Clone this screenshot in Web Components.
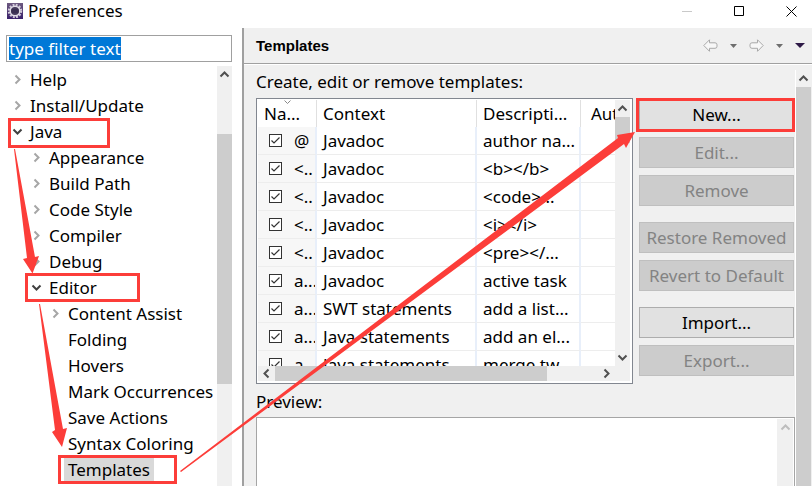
<!DOCTYPE html>
<html lang="en">
<head>
<meta charset="utf-8">
<title>Preferences</title>
<style>
html,body{height:100%;margin:0}
body{font:17px/26px "Noto Sans","Open Sans",sans-serif;color:#000;background:#fff;overflow:hidden}
</style>
</head>
<body>
<pref-window></pref-window>
<script>
const define = (name, html, init) => customElements.define(name, class extends HTMLElement {
  connectedCallback() {
    if (this.shadowRoot) return;
    const t = document.createElement('template');
    t.innerHTML = typeof html === 'function' ? html(this) : html;
    this.attachShadow({mode: 'open'}).append(t.content.cloneNode(true));
    if (init) init(this, this.shadowRoot);
  }
});

/* Chevron pointing right, down, up or left */
const turns = {right: 0, down: 90, left: 180, up: 270};
define('chevron-icon', el => `
<style>:host{display:block;width:11px;height:11px;color:#505050}svg{display:block}</style>
<svg width="11" height="11" viewBox="0 0 11 11"><path transform="rotate(${turns[el.getAttribute('dir')]} 5.5 5.5)" d="M3.5 1.5l4 4-4 4" fill="none" stroke="currentColor" stroke-width="2"/></svg>`);

define('scroll-bar', el => {
  const h = el.hasAttribute('horizontal');
  return `<style>
:host{display:flex;flex-direction:${h ? 'row' : 'column'};background:#f0f0f0;${h ? 'height' : 'width'}:15px;flex:none;overflow:hidden}
.end{flex:0 0 17px;display:grid;place-items:center}
.track{flex:1;display:flex;flex-direction:inherit;min-height:0}
.thumb{background:#cdcdcd;margin-${h ? 'left' : 'top'}:var(--start,0px);flex:0 0 var(--size,0px)}
chevron-icon{color:var(--arrow,#505050)}
</style>
<div class="end"><chevron-icon dir="${h ? 'left' : 'up'}"></chevron-icon></div>
<div class="track"><div class="thumb"></div></div>
${el.hasAttribute('open-end') ? '' : `<div class="end"><chevron-icon dir="${h ? 'right' : 'down'}"></chevron-icon></div>`}`;
});

define('title-bar', `
<style>
:host{display:flex;align-items:center;height:28px;flex:none;padding-left:7px;background:#fff}
h1{font:inherit;line-height:22px;margin:0 auto 6px 5px}
.logo{margin-bottom:6px}
.win{display:flex;gap:10px;align-self:flex-start}
button{width:42px;height:22px;border:0;padding:0;background:none;display:grid;place-items:center}
</style>
<svg class="logo" width="16" height="16" viewBox="0 0 16 16"><defs><linearGradient id="g" x2="0" y2="1"><stop offset="0" stop-color="#6d5a80"/><stop offset="1" stop-color="#39206b"/></linearGradient></defs>
<rect width="16" height="16" fill="url(#g)"/><circle cx="8" cy="8" r="6.2" fill="none" stroke="#d3cddb" stroke-width="2" stroke-dasharray="1.9 1.35"/><circle cx="8" cy="8" r="4.800" fill="#453a5c" stroke="#e2dee8" stroke-width="1.5"/><path d="M4.500 7h7M4.500 9h7" stroke="#2e2446"/></svg>
<h1>Preferences</h1>
<div class="win">
<button aria-label="Minimize"><svg width="11" height="11"><path d="M0 5.5h10" stroke="#c9c9c9"/></svg></button>
<button aria-label="Maximize"><svg width="11" height="11"><path d="M.5.5h9v9h-9z" fill="none" stroke="#000"/></svg></button>
<button aria-label="Close"><svg width="11" height="11"><path d="M.5.5l10 10M10.5.5l-10 10" stroke="#000"/></svg></button>
</div>`);

define('tree-item', el => {
  const s = el.getAttribute('state');
  return `<style>
:host{display:flex;align-items:center;height:26px;padding-left:calc(6px + 19px * ${el.getAttribute('level')});white-space:nowrap}
.mark{width:11px;margin-right:3px;flex:none}
chevron-icon{color:${s === 'open' ? '#404040' : '#a6a6a6'}}
.label{line-height:23px;padding:0 4px;${el.hasAttribute('selected') ? 'background:#d9d9d9' : ''}}
</style>
<span class="mark">${s ? `<chevron-icon dir="${s === 'open' ? 'down' : 'right'}"></chevron-icon>` : ''}</span>
<span class="label"><slot></slot></span>`;
}, el => el.setAttribute('role', 'treeitem'));

define('pref-sidebar', `
<style>
:host{display:flex;flex-direction:column;width:242px;flex:none;box-sizing:border-box;padding:7px 10px 0 6px;min-height:0}
input{font:inherit;line-height:23px;height:27px;box-sizing:border-box;border:1px solid #a0a0a0;padding:0 2px;margin:0 0 4px;width:100%;outline:0;border-radius:0;flex:none}
input::selection{background:#0078d7;color:#fff}
.tree{display:flex;flex:1;min-height:0}
.items{flex:1;min-width:0;overflow:hidden}
scroll-bar{--start:51px;--size:250px}
</style>
<input type="text" aria-label="Filter" value="type filter text">
<div class="tree"><div class="items" role="tree">
<tree-item level="0" state="closed">Help</tree-item>
<tree-item level="0" state="closed">Install/Update</tree-item>
<tree-item level="0" state="open">Java</tree-item>
<tree-item level="1" state="closed">Appearance</tree-item>
<tree-item level="1" state="closed">Build Path</tree-item>
<tree-item level="1" state="closed">Code Style</tree-item>
<tree-item level="1" state="closed">Compiler</tree-item>
<tree-item level="1" state="closed">Debug</tree-item>
<tree-item level="1" state="open">Editor</tree-item>
<tree-item level="2" state="closed">Content Assist</tree-item>
<tree-item level="2">Folding</tree-item>
<tree-item level="2">Hovers</tree-item>
<tree-item level="2">Mark Occurrences</tree-item>
<tree-item level="2">Save Actions</tree-item>
<tree-item level="2">Syntax Coloring</tree-item>
<tree-item level="2" selected>Templates</tree-item>
</div><scroll-bar open-end></scroll-bar></div>`, (el, root) => {
  const i = root.querySelector('input');
  i.focus(); i.select();
});

define('page-header', `
<style>
:host{display:flex;align-items:center;height:35px;flex:none;padding:0 7px 0 12px;border-bottom:1px solid #a0a0a0;box-shadow:0 1px #fff}
h2{font:bold 15px/20px "Liberation Sans",Arial,sans-serif;margin:0 auto 0 0}
nav{display:flex;gap:12px}
button{border:0;background:none;padding:0;height:20px;display:grid;place-items:center}
</style>
<h2>Templates</h2>
<nav aria-label="History">
<button aria-label="Back"><svg width="15" height="13"><path d="M.8 6.5L6.5.8v3H12q2 0 2 2v1.5q0 2-2 2H6.5v3z" fill="#f7f7f7" stroke="#a9a9a9"/></svg></button>
<button aria-label="Back history"><svg width="7" height="4"><path d="M0 0h7L3.5 4z" fill="#6e6e6e"/></svg></button>
<button aria-label="Forward"><svg width="15" height="13"><path d="M14.2 6.5L8.5.8v3H3q-2 0-2 2v1.5q0 2 2 2h5.5v3z" fill="#f7f7f7" stroke="#a9a9a9"/></svg></button>
<button aria-label="Forward history"><svg width="7" height="4"><path d="M0 0h7L3.5 4z" fill="#6e6e6e"/></svg></button>
<button aria-label="View menu"><svg width="10" height="5"><path d="M0 0h10L5 5z" fill="#2e1a47"/></svg></button>
</nav>`);

const rows = [
  ['@', 'Javadoc', 'author na...'], ['<..', 'Javadoc', '<b></b>'], ['<..', 'Javadoc', '<code>...'],
  ['<..', 'Javadoc', '<i></i>'], ['<..', 'Javadoc', '<pre></...'], ['a...', 'Javadoc', 'active task'],
  ['a...', 'SWT statements', 'add a list...'], ['a...', 'Java statements', 'add an el...'], ['a...', 'Java statements', 'merge tw...']
];
const esc = s => s.replace(/</g, '&lt;').replace(/>/g, '&gt;');
define('template-table', () => `
<style>
:host{display:grid;grid-template:266px 15px / 1fr 15px;flex:1;min-width:0;box-sizing:border-box;border:1px solid #828790;padding:1px 2px 2px 1px;background:#fff;position:relative}
.view{overflow:hidden;min-width:0}
table{table-layout:fixed;border-collapse:separate;border-spacing:0;width:100%;line-height:27px}
th{font-weight:400;text-align:left;border-right:1px solid #e0e0e0;background:#fff}
td{border-right:2px solid #e8effa;border-bottom:1px solid #ededed}
th,td{height:27px;padding:0 0 0 6px;white-space:nowrap;overflow:hidden}
tr>:first-child{width:52px}tr>:nth-child(2){width:153px}tr>:nth-child(3){width:97px}
tr>:last-child{border-right:0;padding-left:10px}
td:first-child{background:#f7f7f7}
label{display:flex;align-items:center;gap:12px;padding-left:5px}
input{appearance:none;flex:none;width:13px;height:13px;margin:0;border:1px solid #333;background:#fff url("data:image/svg+xml,%3Csvg xmlns='http://www.w3.org/2000/svg' viewBox='0 0 11 11'%3E%3Cpath d='M1.5 5.5l2.5 2.5 5.5-5.5' fill='none' stroke='%23333' stroke-width='1.2'/%3E%3C/svg%3E")}
.v{--size:26px}.h{--size:272px}
.corner{background:#f0f0f0}
.sort{position:absolute;left:27px;top:1px}
</style>
<div class="view"><table><thead><tr><th>Na...</th><th>Context</th><th>Descripti...</th><th>Aut</th></tr></thead>
<tbody>${rows.map(r => `<tr><td><label><input type="checkbox" checked><span>${esc(r[0])}</span></label></td><td>${r[1]}</td><td>${esc(r[2])}</td><td></td></tr>`).join('')}</tbody></table></div>
<scroll-bar class="v"></scroll-bar><scroll-bar class="h" horizontal></scroll-bar><div class="corner"></div>
<svg class="sort" width="7" height="5"><path d="M.5.5l3 3 3-3" fill="none" stroke="#888"/></svg>`);

define('push-button', el => `
<style>
:host{display:block}
button{display:block;width:100%;height:31px;font:inherit;line-height:27px;padding:0;border:1px solid #adadad;background:#e1e1e1;color:#000;white-space:nowrap}
button:disabled{background:#ccc;border-color:#bfbfbf;color:#838383}
</style>
<button type="button" ${el.hasAttribute('disabled') ? 'disabled' : ''}><slot></slot></button>`);

define('button-column', `
<style>
:host{display:flex;flex-direction:column;gap:16px;width:155px;flex:none;padding-top:1px}
div{display:flex;flex-direction:column;gap:7px}
</style>
<div><push-button>New...</push-button><push-button disabled>Edit...</push-button><push-button disabled>Remove</push-button></div>
<div><push-button disabled>Restore Removed</push-button><push-button disabled>Revert to Default</push-button></div>
<div><push-button>Import...</push-button><push-button disabled>Export...</push-button></div>`);

define('preview-pane', `
<style>
:host{display:flex;flex:1;min-height:0;border:1px solid #a5a5a5;border-bottom:0;background:#fff;padding:1px 1px 0 0}
textarea{flex:1;min-width:0;border:0;padding:4px;resize:none;outline:0;font:inherit;background:#fff}
scroll-bar{--arrow:#bdbdbd;width:16px}
</style>
<textarea readonly aria-label="Preview"></textarea><scroll-bar open-end></scroll-bar>`);

define('templates-page', `
<style>
:host{display:flex;flex-direction:column;flex:1;min-width:0;min-height:0;background:#f0f0f0;border-left:2px solid #a0a0a0;box-sizing:border-box}
.body{display:flex;flex:1;min-height:0;padding:6px 1px 0 12px}
.content{display:flex;flex-direction:column;flex:1;min-width:0}
.edit{display:flex;gap:6px;padding-right:1px}
p{margin:0;line-height:26px}
p.top{height:28px;line-height:24px}
p.prev{height:33px;line-height:36px}
.outer{border-left:1px solid #fff;--size:2000px}
</style>
<page-header></page-header>
<div class="body"><div class="content">
<p class="top">Create, edit or remove templates:</p>
<div class="edit"><template-table></template-table><button-column></button-column></div>
<p class="prev">Preview:</p>
<preview-pane></preview-pane>
</div><scroll-bar class="outer" open-end></scroll-bar></div>`);

/* Red callouts drawn over the window */
define('callout-layer', `
<style>:host{position:absolute;inset:0;pointer-events:none;overflow:hidden}svg{display:block;width:100%;height:100%}</style>
<svg aria-hidden="true"><g fill="none" stroke="#fc3d39" stroke-width="3">
<rect x="9.5" y="119.5" width="99" height="27"/><rect x="26.5" y="274.5" width="112" height="26"/><rect x="59.5" y="456.5" width="116" height="26"/><rect x="637.5" y="99.5" width="156" height="31"/></g>
<g fill="#fc3d39"><path d="M14 149l13 109-4 1 9.5 14.5L39 256l-4 1L15 149z"/><path d="M39 304l16 126-3 2 10 15 5-19-4 1-23-125z"/><path d="M180 471L618 138l-1-3 18-3-9 16-2-4L181 472z"/></g></svg>`);

define('pref-window', `
<style>
:host{display:flex;flex-direction:column;height:100vh;position:relative;overflow:hidden}
.main{display:flex;flex:1;min-height:0}
</style>
<title-bar></title-bar>
<div class="main"><pref-sidebar></pref-sidebar><templates-page></templates-page></div>
<callout-layer></callout-layer>`);
</script>
</body>
</html>
